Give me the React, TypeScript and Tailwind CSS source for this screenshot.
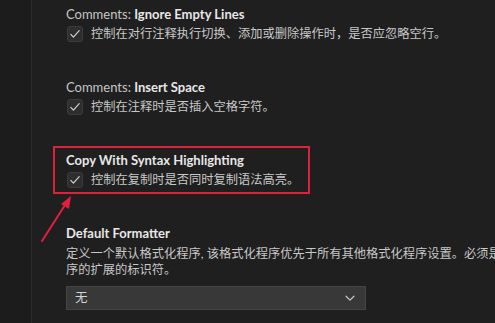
import React from "react";

const font = { fontFamily: 'Lato, "Noto Sans CJK SC", sans-serif' };

function CheckBox() {
  return (
    <span className="flex h-[16px] w-[16px] shrink-0 items-center justify-center rounded-[3px] border border-[#3c3c3c] bg-[#2e2e2e]">
      <svg viewBox="0 0 16 16" className="h-[14px] w-[14px]" fill="none" stroke="#d4d4d4" strokeWidth="1.3" strokeLinecap="round" strokeLinejoin="round">
        <path d="M3.2 8.4l3 3.1 6.6-7.3" />
      </svg>
    </span>
  );
}

function Setting({ category, name, desc }: { category?: string; name: string; desc: string }) {
  return (
    <div>
      <div className="h-[18px] text-[13px] leading-[18px] text-[#e7e7e7]">
        {category ? <span className="text-[#c5c5c5]">{category} </span> : null}
        <span className="font-bold">{name}</span>
      </div>
      <div className="mt-[2px] flex h-[18px] items-center gap-[8px] pl-[1px]">
        <CheckBox />
        <span className="text-[12.25px] leading-[18px] text-[#c8c8c8]">{desc}</span>
      </div>
    </div>
  );
}

export default function App() {
  return (
    <div className="relative flex h-[323px] w-[495px] overflow-hidden bg-[#1f1f1f]" style={font}>
      <div className="w-[32px] shrink-0 border-r border-[#2c2c2c] bg-[#1c1c1c]" />
      <div className="w-[600px] shrink-0 pl-[34px] pt-[5px]">
        <Setting category="Comments:" name="Ignore Empty Lines" desc="控制在对行注释执行切换、添加或删除操作时，是否应忽略空行。" />
        <div className="mt-[35px]">
          <Setting category="Comments:" name="Insert Space" desc="控制在注释时是否插入空格字符。" />
        </div>
        <div className="-ml-[13px] mt-[30px] w-[257px] border-2 border-[#e0213b] pb-[3px] pl-[11px] pt-[3px]">
          <Setting name="Copy With Syntax Highlighting" desc="控制在复制时是否同时复制语法高亮。" />
        </div>
        <div className="mt-[30px]">
          <div className="h-[18px] text-[13px] font-bold leading-[18px] text-[#e7e7e7]">Default Formatter</div>
          <div className="mt-[4px] text-[12.25px] leading-[16px] text-[#c8c8c8]">
            <p className="whitespace-nowrap">定义一个默认格式化程序, 该格式化程序优先于所有其他格式化程序设置。必须是提供格式化程</p>
            <p>序的扩展的标识符。</p>
          </div>
          <div className="mt-[8px] flex h-[24px] w-[300px] items-center justify-between border border-[#454545] bg-[#383838] pl-[8px] pr-[8px]">
            <span className="text-[12.5px] text-[#d4d4d4]">无</span>
            <svg viewBox="0 0 16 16" className="h-[14px] w-[14px]" fill="none" stroke="#c8c8c8" strokeWidth="1.4" strokeLinecap="round" strokeLinejoin="round">
              <path d="M3.5 6l4.5 4.5L12.5 6" />
            </svg>
          </div>
        </div>
      </div>
      <svg className="pointer-events-none absolute left-0 top-0" width="495" height="323" viewBox="0 0 495 323">
        <line x1="42" y1="241" x2="65" y2="205" stroke="#e41e3f" strokeWidth="2" strokeLinecap="round" />
        <polygon points="71,196 61,204 69,209" fill="#e41e3f" />
      </svg>
    </div>
  );
}
